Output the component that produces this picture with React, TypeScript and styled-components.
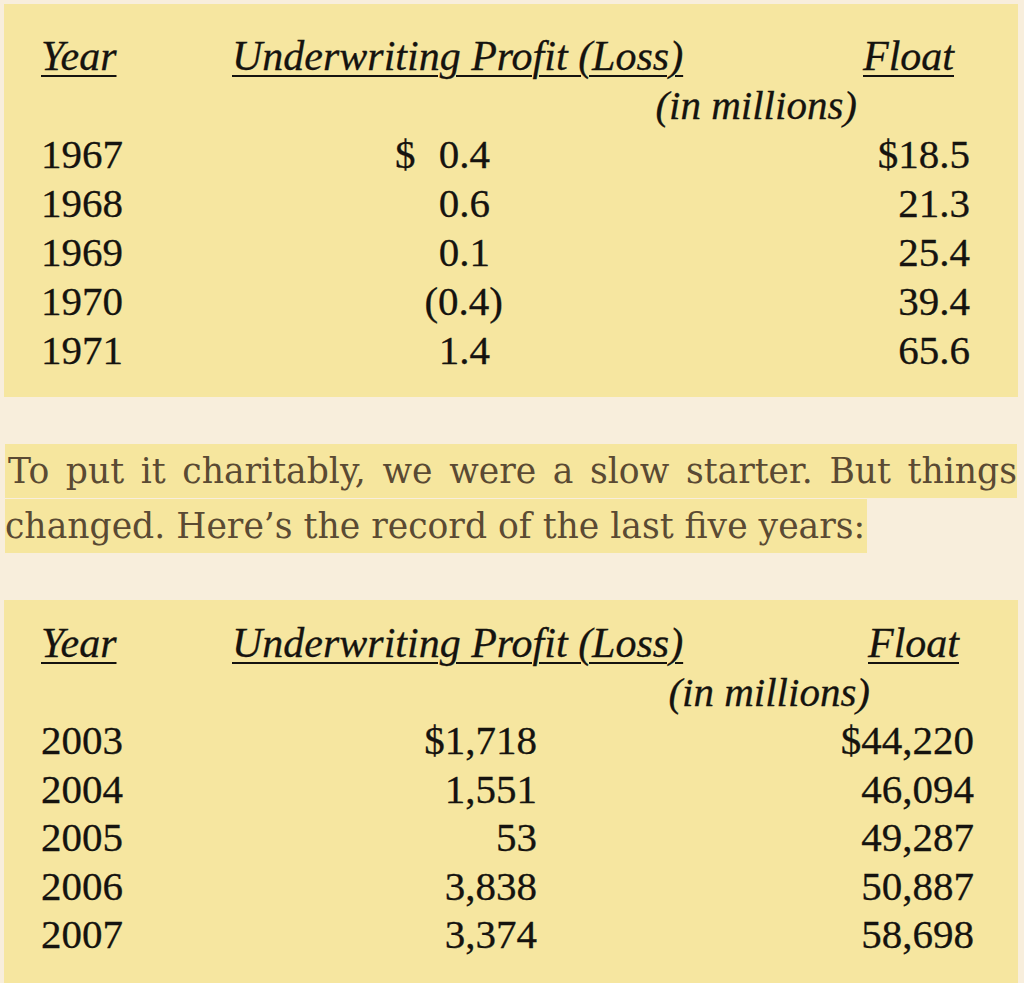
import React from "react";
import styled, { createGlobalStyle } from "styled-components";

const Global = createGlobalStyle`
  html, body {
    margin: 0;
    padding: 0;
    background: #f8eedc;
  }
`;

const Page = styled.main`
  width: 1024px;
  height: 983px;
  box-sizing: border-box;
  padding: 4px 6px 0 4px;
  display: flex;
  flex-direction: column;
  background: #f8eedc;
  overflow: hidden;
`;

type CardProps = {
  $pt: number;
  $pb: number;
  $pr: number;
  $lh: number;
};

const Card = styled.section<CardProps>`
  background: #f6e6a0;
  padding: ${(p) => p.$pt}px ${(p) => p.$pr}px ${(p) => p.$pb}px 37px;
  font-family: "Liberation Serif", "Times New Roman", serif;
  font-size: 41px;
  line-height: ${(p) => p.$lh}px;
  color: #15130f;
  -webkit-text-stroke: 0.3px #15130f;
`;

const HeaderRow = styled.div<{ $yearW: number }>`
  display: grid;
  grid-template-columns: ${(p) => p.$yearW}px 1fr auto;
  align-items: baseline;
`;

const HeadLabel = styled.span<{ $mr?: number }>`
  font-style: italic;
  font-size: 42px;
  text-decoration: underline;
  text-decoration-thickness: 2px;
  text-underline-offset: 5px;
  margin-right: ${(p) => p.$mr ?? 0}px;
  justify-self: start;
`;

const FloatLabel = styled(HeadLabel)`
  justify-self: end;
`;

const UnitsRow = styled.div<{ $pr: number }>`
  font-style: italic;
  text-align: right;
  padding-right: ${(p) => p.$pr}px;
`;

const DataRow = styled.div<{ $yearW: number; $profitW: number }>`
  display: grid;
  grid-template-columns: ${(p) => p.$yearW}px ${(p) => p.$profitW}px 1fr;
`;

const YearCell = styled.span`
  text-align: left;
`;

const NumCell = styled.span<{ $hang?: number; $gap?: boolean }>`
  text-align: right;
  white-space: pre;
  padding-right: ${(p) => p.$hang ?? 0}px;
  word-spacing: ${(p) => (p.$gap ? "0.32em" : "normal")};
`;

const Para = styled.p`
  margin: 47px 0 46px 1px;
  width: 1012px;
  font-family: "DejaVu Serif", serif;
  font-size: 34.6px;
  line-height: 55px;
  text-align: justify;
  color: #5a4a33;
`;

const Mark = styled.span`
  background: #f6e69e;
  padding: 7.4px 2px 7.4px 3px;
`;

type Row = { year: string; profit: string; float: string; paren?: boolean; spaced?: boolean };

type TableSpec = {
  rows: Row[];
  pt: number;
  pb: number;
  pr: number;
  lh: number;
  profitW: number;
  floatMr: number;
  unitsPr: number;
  hang: number;
};

const YEAR_W = 191;

function FinTable({ spec }: { spec: TableSpec }) {
  return (
    <Card $pt={spec.pt} $pb={spec.pb} $pr={spec.pr} $lh={spec.lh}>
      <HeaderRow $yearW={YEAR_W}>
        <HeadLabel>Year</HeadLabel>
        <HeadLabel>Underwriting Profit (Loss)</HeadLabel>
        <FloatLabel $mr={spec.floatMr}>Float</FloatLabel>
      </HeaderRow>
      <UnitsRow $pr={spec.unitsPr}>(in millions)</UnitsRow>
      {spec.rows.map((r) => (
        <DataRow key={r.year} $yearW={YEAR_W} $profitW={spec.profitW}>
          <YearCell>{r.year}</YearCell>
          <NumCell $hang={r.paren ? 0 : spec.hang} $gap={r.spaced}>
            {r.profit}
          </NumCell>
          <NumCell>{r.float}</NumCell>
        </DataRow>
      ))}
    </Card>
  );
}

const early: TableSpec = {
  rows: [
    { year: "1967", profit: "$ 0.4", float: "$18.5", spaced: true },
    { year: "1968", profit: "0.6", float: "21.3" },
    { year: "1969", profit: "0.1", float: "25.4" },
    { year: "1970", profit: "(0.4)", float: "39.4", paren: true },
    { year: "1971", profit: "1.4", float: "65.6" },
  ],
  pt: 28,
  pb: 22,
  pr: 48,
  lh: 49,
  profitW: 271,
  floatMr: 16,
  unitsPr: 113,
  hang: 13,
};

const recent: TableSpec = {
  rows: [
    { year: "2003", profit: "$1,718", float: "$44,220" },
    { year: "2004", profit: "1,551", float: "46,094" },
    { year: "2005", profit: "53", float: "49,287" },
    { year: "2006", profit: "3,838", float: "50,887" },
    { year: "2007", profit: "3,374", float: "58,698" },
  ],
  pt: 19,
  pb: 24,
  pr: 44,
  lh: 48.5,
  profitW: 305,
  floatMr: 15,
  unitsPr: 104,
  hang: 0,
};

export default function App() {
  return (
    <>
      <Global />
      <Page>
        <FinTable spec={early} />
        <Para>
          <Mark>
            To put it charitably, we were a slow starter. But things changed. Here’s the record of the last five years:
          </Mark>
        </Para>
        <FinTable spec={recent} />
      </Page>
    </>
  );
}
